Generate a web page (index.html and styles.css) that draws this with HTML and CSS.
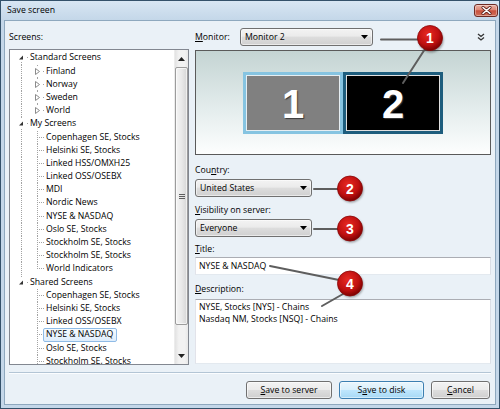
FILE: index.html
```html
<!DOCTYPE html>
<html>
<head>
<meta charset="utf-8">
<title>Save screen</title>
<link rel="stylesheet" href="styles.css">
</head>
<body>
<div class="window">
  <div class="titlebar">
    <span class="title">Save screen</span>
    <span class="close"><svg width="11" height="9" viewBox="0 0 11 9"><path d="M2 1.5L9 7.5M9 1.5L2 7.5" stroke="#5a1f1a" stroke-width="3" stroke-linecap="round"/><path d="M2 1.5L9 7.5M9 1.5L2 7.5" stroke="#fff" stroke-width="1.6" stroke-linecap="round"/></svg></span>
  </div>
  <div class="frame">
    <div class="client">
      <div class="main">
        <div class="left">
          <div class="label-row">Screens:</div>
          <div class="tree">
            <div class="tree-items">
              <div class="row"><span class="g d"><svg class="exp" viewBox="0 0 9 9"><rect width="9" height="9" fill="#fff"/><path d="M6 2.5V6.5H2Z" fill="#333"/></svg></span><span class="txt">Standard Screens</span></div>
              <div class="row"><span class="g v"></span><span class="g t"><svg class="exp" viewBox="0 0 9 9"><rect width="9" height="9" fill="#fff"/><path d="M2.5 1.5L6.5 4.5L2.5 7.5Z" fill="#fff" stroke="#8c8c8c"/></svg></span><span class="txt">Finland</span></div>
              <div class="row"><span class="g v"></span><span class="g t"><svg class="exp" viewBox="0 0 9 9"><rect width="9" height="9" fill="#fff"/><path d="M2.5 1.5L6.5 4.5L2.5 7.5Z" fill="#fff" stroke="#8c8c8c"/></svg></span><span class="txt">Norway</span></div>
              <div class="row"><span class="g v"></span><span class="g t"><svg class="exp" viewBox="0 0 9 9"><rect width="9" height="9" fill="#fff"/><path d="M2.5 1.5L6.5 4.5L2.5 7.5Z" fill="#fff" stroke="#8c8c8c"/></svg></span><span class="txt">Sweden</span></div>
              <div class="row"><span class="g v"></span><span class="g l"><svg class="exp" viewBox="0 0 9 9"><rect width="9" height="9" fill="#fff"/><path d="M2.5 1.5L6.5 4.5L2.5 7.5Z" fill="#fff" stroke="#8c8c8c"/></svg></span><span class="txt">World</span></div>
              <div class="row"><span class="g t"><svg class="exp" viewBox="0 0 9 9"><rect width="9" height="9" fill="#fff"/><path d="M6 2.5V6.5H2Z" fill="#333"/></svg></span><span class="txt">My Screens</span></div>
              <div class="row"><span class="g v"></span><span class="g t"></span><span class="txt">Copenhagen SE, Stocks</span></div>
              <div class="row"><span class="g v"></span><span class="g t"></span><span class="txt">Helsinki SE, Stocks</span></div>
              <div class="row"><span class="g v"></span><span class="g t"></span><span class="txt">Linked HSS/OMXH25</span></div>
              <div class="row"><span class="g v"></span><span class="g t"></span><span class="txt">Linked OSS/OSEBX</span></div>
              <div class="row"><span class="g v"></span><span class="g t"></span><span class="txt">MDI</span></div>
              <div class="row"><span class="g v"></span><span class="g t"></span><span class="txt">Nordic News</span></div>
              <div class="row"><span class="g v"></span><span class="g t"></span><span class="txt">NYSE &amp; NASDAQ</span></div>
              <div class="row"><span class="g v"></span><span class="g t"></span><span class="txt">Oslo SE, Stocks</span></div>
              <div class="row"><span class="g v"></span><span class="g t"></span><span class="txt">Stockholm SE, Stocks</span></div>
              <div class="row"><span class="g v"></span><span class="g t"></span><span class="txt">Stockholm SE, Stocks</span></div>
              <div class="row"><span class="g v"></span><span class="g l"></span><span class="txt">World Indicators</span></div>
              <div class="row"><span class="g l"><svg class="exp" viewBox="0 0 9 9"><rect width="9" height="9" fill="#fff"/><path d="M6 2.5V6.5H2Z" fill="#333"/></svg></span><span class="txt">Shared Screens</span></div>
              <div class="row"><span class="g"></span><span class="g t"></span><span class="txt">Copenhagen SE, Stocks</span></div>
              <div class="row"><span class="g"></span><span class="g t"></span><span class="txt">Helsinki SE, Stocks</span></div>
              <div class="row"><span class="g"></span><span class="g t"></span><span class="txt">Linked OSS/OSEBX</span></div>
              <div class="row"><span class="g"></span><span class="g t"></span><span class="txt sel">NYSE &amp; NASDAQ</span></div>
              <div class="row"><span class="g"></span><span class="g t"></span><span class="txt">Oslo SE, Stocks</span></div>
              <div class="row"><span class="g"></span><span class="g t"></span><span class="txt">Stockholm SE, Stocks</span></div>
            </div>
            <div class="scrollbar">
              <div class="sb-btn"><svg width="7" height="4" viewBox="0 0 7 4"><path d="M0 4L3.5 0L7 4Z" fill="#222"/></svg></div>
              <div class="sb-thumb"><span class="grip"></span></div>
              <div class="sb-track"></div>
              <div class="sb-btn"><svg width="7" height="4" viewBox="0 0 7 4"><path d="M0 0L3.5 4L7 0Z" fill="#222"/></svg></div>
            </div>
          </div>
        </div>
        <div class="right">
          <div class="monitor-row">
            <span class="mon-label"><u>M</u>onitor:</span>
            <div class="combo monitor-combo"><span class="combo-text">Monitor 2</span><svg class="arrow" width="7" height="4" viewBox="0 0 7 4"><path d="M0 0H7L3.5 4Z" fill="#000"/></svg></div>
            <svg class="chevrons" width="8" height="8" viewBox="0 0 8 8"><path d="M1 1L4 3.5L7 1M1 4.5L4 7L7 4.5" fill="none" stroke="#333" stroke-width="1.3"/></svg>
          </div>
          <div class="preview">
            <div class="mon mon1"><span>1</span></div>
            <div class="mon mon2"><span>2</span></div>
          </div>
          <div class="field-label country-label">Cou<u>n</u>try:</div>
          <div class="combo short-combo"><span class="combo-text">United States</span><svg class="arrow" width="7" height="4" viewBox="0 0 7 4"><path d="M0 0H7L3.5 4Z" fill="#000"/></svg></div>
          <div class="field-label vis-label"><u>V</u>isibility on server:</div>
          <div class="combo short-combo"><span class="combo-text">Everyone</span><svg class="arrow" width="7" height="4" viewBox="0 0 7 4"><path d="M0 0H7L3.5 4Z" fill="#000"/></svg></div>
          <div class="field-label title-label"><u>T</u>itle:</div>
          <div class="textbox">NYSE &amp; NASDAQ</div>
          <div class="field-label desc-label"><u>D</u>escription:</div>
          <div class="textarea">NYSE, Stocks [NYS] - Chains<br>Nasdaq NM, Stocks [NSQ] - Chains</div>
        </div>
      </div>
      <div class="separator"></div>
      <div class="buttons">
        <div class="btn btn-server"><u>S</u>ave to server</div>
        <div class="btn btn-disk default">S<u>a</u>ve to disk</div>
        <div class="btn btn-cancel"><u>C</u>ancel</div>
      </div>
    </div>
  </div>
</div>
<svg class="annot" width="500" height="409" viewBox="0 0 500 409">
  <defs>
    <radialGradient id="ball" cx="42%" cy="35%" r="65%">
      <stop offset="0" stop-color="#e82a22"/>
      <stop offset="0.65" stop-color="#bf1010"/>
      <stop offset="1" stop-color="#7d0202"/>
    </radialGradient>
    <filter id="sh" x="-50%" y="-50%" width="200%" height="200%">
      <feGaussianBlur stdDeviation="1.2"/>
    </filter>
  </defs>
  <g stroke="#5e5e5e" stroke-width="2" stroke-linecap="round" fill="none">
    <path d="M381 39.5H419"/>
    <path d="M425 49L403 83"/>
    <path d="M314 189H338"/>
    <path d="M314 229H338"/>
    <path d="M270 266L339 280"/>
    <path d="M343 294L322 306"/>
  </g>
  <g fill="rgba(0,0,0,0.35)" filter="url(#sh)">
    <circle cx="431" cy="40" r="12.5"/>
    <circle cx="351" cy="190" r="12.5"/>
    <circle cx="351" cy="230" r="12.5"/>
    <circle cx="351" cy="285" r="12.5"/>
  </g>
  <g fill="url(#ball)" stroke="#8a0505" stroke-width="0.8">
    <circle cx="430" cy="38" r="12.5"/>
    <circle cx="350" cy="188.5" r="12.5"/>
    <circle cx="350" cy="228.5" r="12.5"/>
    <circle cx="350" cy="283.5" r="12.5"/>
  </g>
  <g fill="#fff" font-family="Liberation Sans, Arial, sans-serif" font-weight="bold" font-size="14" text-anchor="middle">
    <text x="430" y="43">1</text>
    <text x="350" y="193.5">2</text>
    <text x="350" y="233.5">3</text>
    <text x="350" y="288.5">4</text>
  </g>
</svg>
</body>
</html>
```

FILE: styles.css
```css
* { box-sizing: border-box; }
html, body { margin: 0; padding: 0; }
body { width: 500px; height: 409px; overflow: hidden; position: relative; background: #fff; }

.window {
  width: 500px; height: 409px;
  border: 1px solid #34516a;
  background: #c4d7e9;
  display: flex; flex-direction: column;
  font-family: "Open Sans", "Noto Sans", sans-serif;
  font-size: 8.7px; color: #000;
}
u { text-decoration: underline; text-underline-offset: 1px; text-decoration-thickness: 1px; }

.titlebar {
  height: 19px; flex: none;
  display: flex; align-items: center;
  padding: 0 1px 0 6px;
  background: linear-gradient(#d8e6f3, #c4d7e9);
}
.title { flex: 1; line-height: 19px; }
.close {
  width: 24px; height: 13px;
  display: flex; align-items: center; justify-content: center;
  border: 1px solid #6e2b24; border-radius: 3px;
  background: linear-gradient(#eab0a2 0%, #de8877 45%, #c8503c 52%, #d0705a 100%);
  box-shadow: inset 0 0 0 1px rgba(255,255,255,0.35);
}

.frame { flex: 1; padding: 0 3px 3px; display: flex; }
.client {
  flex: 1;
  border: 1px solid #8ea8be;
  background: #eaf1f7;
  display: flex; flex-direction: column;
}

.main { display: flex; gap: 6px; padding: 7px 4px 0; }
.left { width: 180px; flex: none; display: flex; flex-direction: column; }
.label-row { height: 18px; line-height: 19px; padding-left: 0; }

.tree {
  margin-top: 3px; height: 316px;
  border: 1px solid #828790;
  background: #fff;
  display: flex;
}
.tree-items { flex: 1; overflow: hidden; padding: 1.4px 0 0 3px; }
.row { display: flex; height: 13.2px; }
.txt { line-height: 13.2px; padding: 0 2px 0 1px; white-space: nowrap; }
.txt.sel {
  margin-left: -2px; padding: 0 3px 0 2px;
  border: 1px solid #8fbbe6; border-radius: 2px;
  line-height: 11.2px;
  background: linear-gradient(#f6fbff, #deedfc);
}

.g {
  width: 16px; flex: none;
  display: flex; align-items: center;
  background-repeat: no-repeat;
  --dv: repeating-linear-gradient(to bottom, #a3a3a3 0 1px, transparent 1px 2px);
  --dh: repeating-linear-gradient(to right, #a3a3a3 0 1px, transparent 1px 2px);
}
.g.v { background-image: var(--dv); background-position: 8px 0; background-size: 1px 100%; }
.g.t { background-image: var(--dv), var(--dh); background-position: 8px 0, 10px 6px; background-size: 1px 100%, 6px 1px; }
.g.l { background-image: var(--dv), var(--dh); background-position: 8px 0, 10px 6px; background-size: 1px 7px, 6px 1px; }
.g.d { background-image: var(--dv), var(--dh); background-position: 8px 7px, 10px 6px; background-size: 1px 7px, 6px 1px; }
.exp { width: 9px; height: 9px; margin-left: 4px; display: block; }

.scrollbar {
  width: 14px; flex: none;
  display: flex; flex-direction: column;
  background: linear-gradient(to right, #e2e2e2, #f2f2f2 30%, #f2f2f2 75%, #e8e8e8);
  border-left: 1px solid #ececec;
}
.sb-btn { height: 17px; flex: none; display: flex; align-items: center; justify-content: center; }
.sb-thumb {
  height: 258px; flex: none; margin: 0 0 0 0;
  border: 1px solid #9c9c9c; border-radius: 2px;
  background: linear-gradient(to right, #f4f4f4, #e9e9e9 50%, #d6d6d6);
  box-shadow: inset 0 0 0 1px rgba(255,255,255,0.6);
  display: flex; align-items: center; justify-content: center;
}
.grip {
  width: 6px; height: 5px;
  background: repeating-linear-gradient(to bottom, #5e5e5e 0 1px, transparent 1px 2px);
}
.sb-track { flex: 1; }

.right { width: 296px; flex: none; display: flex; flex-direction: column; }
.monitor-row { height: 18px; display: flex; align-items: center; }
.mon-label { width: 45px; flex: none; }
.combo {
  height: 18px;
  display: flex; align-items: center;
  border: 1px solid #707070; border-radius: 3px;
  background: linear-gradient(#f3f3f3 0%, #ebebeb 45%, #dddddd 50%, #d0d0d0 100%);
  box-shadow: inset 0 0 0 1px rgba(255,255,255,0.55);
  padding: 0 4px 0 4px;
}
.combo-text { flex: 1; white-space: nowrap; }
.arrow { flex: none; display: block; }
.monitor-combo { width: 133px; }
.chevrons { margin-left: auto; margin-right: 6px; display: block; }
.short-combo { width: 117px; margin-top: 2px; }

.preview {
  margin-top: 4px; height: 105px;
  border: 1px solid #5a5a5a;
  background: linear-gradient(#c4d4d3 0%, #e3ecec 55%, #fdfefe 100%);
  display: flex; align-items: center; justify-content: center;
}
.mon {
  width: 100px; height: 62px;
  border: 3px solid #86c4e1;
  display: flex; align-items: center; justify-content: center;
  font-family: "Liberation Sans", Arial, sans-serif;
  font-weight: bold; font-size: 40px; color: #fff;
  text-shadow: 1px 1px 1px #3a3a3a;
}
.mon1 { background: #808080; box-shadow: inset 0 0 0 1px #e6eef2; }
.mon2 { border-color: #1d5d7d; background: #000; box-shadow: inset 0 0 0 1px #e0e0e0; }
.mon span { line-height: 1; margin-top: 2px; }

.field-label { line-height: 14px; }
.country-label { margin-top: 8px; }
.vis-label { margin-top: 6px; }
.title-label { margin-top: 5px; }
.desc-label { margin-top: 7px; }

.textbox {
  margin-top: 1px; height: 18px;
  border: 1px solid #abadb3; border-color: #abadb3 #dbdfe6 #e3e9ef #e2e3ea;
  background: #fff;
  padding: 0 3px;
  line-height: 16px;
  white-space: nowrap;
}
.textarea {
  margin-top: 3px; height: 65px;
  border: 1px solid #abadb3; border-color: #abadb3 #dbdfe6 #e3e9ef #e2e3ea;
  background: #fff;
  padding: 1px 3px;
  line-height: 12px;
}

.separator {
  margin: 7px 4px 0;
  height: 2px;
  border-top: 1px solid #b3c5d5;
  border-bottom: 1px solid #fbfdff;
}
.buttons {
  display: flex; justify-content: flex-end; gap: 7px;
  margin-top: 7px; padding-right: 5px;
}
.btn {
  height: 18px;
  display: flex; align-items: center; justify-content: center;
  border: 1px solid #707070; border-radius: 3px;
  background: linear-gradient(#f3f3f3 0%, #ebebeb 48%, #dddddd 52%, #cfcfcf 100%);
  box-shadow: inset 0 0 0 1px rgba(255,255,255,0.6);
  white-space: nowrap;
}
.btn.default {
  border-color: #3c7fb1;
  background: linear-gradient(#eaf6fd 0%, #d9f0fc 48%, #bee6fd 52%, #a7d9f5 100%);
  box-shadow: inset 0 0 0 1px rgba(255,255,255,0.5);
}
.btn-server { width: 86px; }
.btn-disk { width: 85px; }
.btn-cancel { width: 59px; }

.annot { position: absolute; left: 0; top: 0; pointer-events: none; }
```
